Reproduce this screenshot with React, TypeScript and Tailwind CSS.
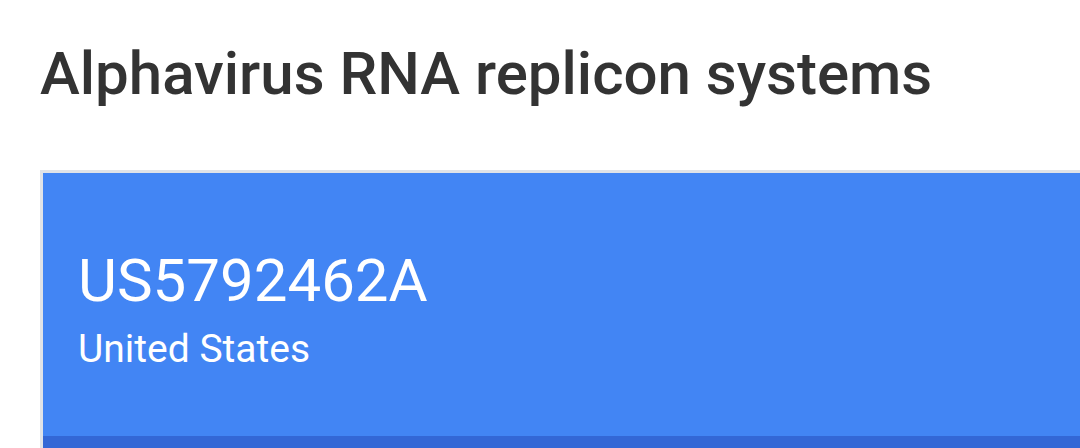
export default function App() {
  return (
    <div className="h-[448px] w-full overflow-hidden bg-white pl-10 pt-[38px] font-['Roboto',sans-serif]">
      <h1 className="text-[60px] leading-[72px] font-medium text-[#333333]">Alphavirus RNA replicon systems</h1>
      <div className="mt-[60px] -mr-10 border-[3px] border-r-0 border-[#e0e3e8] bg-[#4285f4]">
        <div className="pl-[35px] pt-[72px] pb-[63px]">
          <p className="text-[60px] leading-[72px] text-white">US5792462A</p>
          <p className="mt-[9px] text-[39px] leading-[47px] text-white">United States</p>
        </div>
        <div className="h-12 bg-[#3367d6]" />
      </div>
    </div>
  )
}
